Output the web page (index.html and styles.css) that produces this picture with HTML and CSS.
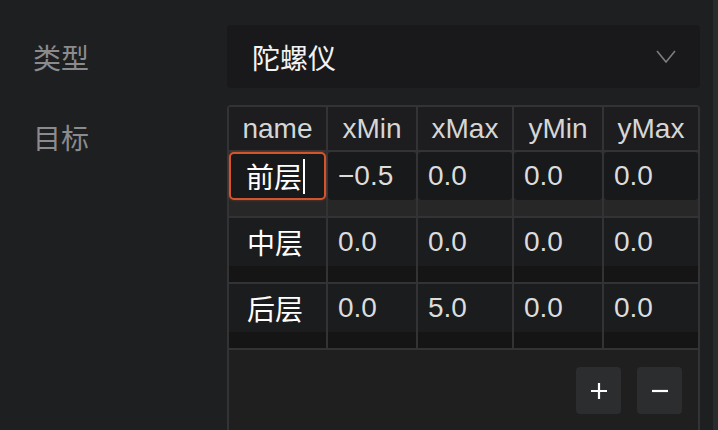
FILE: index.html
```html
<!DOCTYPE html>
<html lang="zh-CN">
<head>
  <meta charset="UTF-8">
  <title>陀螺仪</title>
  <link rel="stylesheet" href="styles.css">
</head>
<body>

  <div class="page">
    <div class="panel">

      <div class="field">
        <div class="label">类型</div>
        <div class="select">
          <span>陀螺仪</span>
          <svg class="chevron" width="20" height="13" viewBox="0 0 20 13">
            <polyline points="1,1 10,12 19,1" fill="none" stroke="#7c7d80" stroke-width="1.6"/>
          </svg>
        </div>
      </div>

      <div class="field targets">
        <div class="label label-top">目标</div>
        <div class="table">
          <div class="th">name</div>
          <div class="th">xMin</div>
          <div class="th">xMax</div>
          <div class="th">yMin</div>
          <div class="th">yMax</div>

          <!-- editing row -->
          <div class="cell edit"><div class="val name focus">前层<span class="caret"></span></div></div>
          <div class="cell edit"><div class="val">−0.5</div></div>
          <div class="cell edit"><div class="val">0.0</div></div>
          <div class="cell edit"><div class="val">0.0</div></div>
          <div class="cell edit"><div class="val">0.0</div></div>

          <div class="cell"><div class="val name">中层</div></div>
          <div class="cell"><div class="val">0.0</div></div>
          <div class="cell"><div class="val">0.0</div></div>
          <div class="cell"><div class="val">0.0</div></div>
          <div class="cell"><div class="val">0.0</div></div>

          <div class="cell"><div class="val name">后层</div></div>
          <div class="cell"><div class="val">0.0</div></div>
          <div class="cell"><div class="val">5.0</div></div>
          <div class="cell"><div class="val">0.0</div></div>
          <div class="cell"><div class="val">0.0</div></div>

          <div class="footer">
            <button class="btn" title="add">
              <svg width="16" height="16" viewBox="0 0 16 16">
                <path d="M0 8H16M8 0V16" stroke="#ffffff" stroke-width="2.2"/>
              </svg>
            </button>
            <button class="btn" title="remove">
              <svg width="16" height="16" viewBox="0 0 16 16">
                <path d="M0 8H16" stroke="#ffffff" stroke-width="2.2"/>
              </svg>
            </button>
          </div>
        </div>
      </div>

    </div>
    <div class="scroll"></div>
  </div>

</body>
</html>
```

FILE: styles.css
```css
body {
  margin: 0;
  background-color: #1e1f21;
  font-family: 'Liberation Sans', 'Noto Sans CJK SC', sans-serif;
  font-size: 28px;
  overflow: hidden;
}
.page {
  display: flex;
  height: 430px;
}
.panel {
  flex: 1;
  padding-top: 25px;
}
.scroll {
  width: 5px;
  background-color: #2a2b2d;
}
.field {
  display: flex;
}
.targets {
  margin-top: 17px;
}
.label {
  width: 227px;
  box-sizing: border-box;
  padding-left: 33px;
  color: #8b8b8d;
  display: flex;
  align-items: center;
}
.label-top {
  align-items: flex-start;
  padding-top: 12px;
}
.select {
  width: 473px;
  height: 63px;
  box-sizing: border-box;
  padding: 0 24px 0 25px;
  background-color: #19191b;
  border-radius: 4px;
  color: #f2f2f2;
  display: flex;
  align-items: center;
  justify-content: space-between;
}
.chevron {
  display: block;
}
.table {
  width: 473px;
  box-sizing: border-box;
  border: 2px solid #333335;
  border-bottom: none;
  border-radius: 4px 4px 0 0;
  background-color: #333335;
  display: grid;
  grid-template-columns: 97px 88px 94px 88px 94px;
  gap: 2px;
  height: 325px;
  grid-template-rows: 43px 64px 64px 64px 1fr;
}
.th {
  background-color: #1d1d1f;
  color: #d6d6d6;
  display: flex;
  align-items: center;
  justify-content: center;
}
.cell {
  background-color: #151516;
  padding-bottom: 16px;
}
.cell.edit {
  background-color: #272728;
}
.val {
  height: 48px;
  box-sizing: border-box;
  padding-left: 10px;
  background-color: #1b1c1e;
  color: #dcdcdc;
  display: flex;
  align-items: center;
}
.edit .val {
  background-color: #18191b;
  border-radius: 4px;
}
.val.name {
  padding-left: 18px;
  color: #ffffff;
}
.val.focus {
  padding-left: 15px;
  border: 2px solid #d4552c;
  border-radius: 5px;
  box-shadow: 0 0 3px rgba(212, 85, 44, 0.45);
}
.caret {
  width: 2px;
  height: 35px;
  margin-left: 1px;
  background-color: #ffffff;
}
.footer {
  grid-column: 1 / -1;
  background-color: #1f1f20;
  display: flex;
  justify-content: flex-end;
  align-items: flex-start;
  gap: 16px;
  padding: 17px 16px 0 0;
}
.btn {
  width: 45px;
  height: 47px;
  border: none;
  border-radius: 4px;
  background-color: #2c2d2f;
  padding: 0;
  display: flex;
  align-items: center;
  justify-content: center;
}
.btn svg {
  display: block;
}
```
